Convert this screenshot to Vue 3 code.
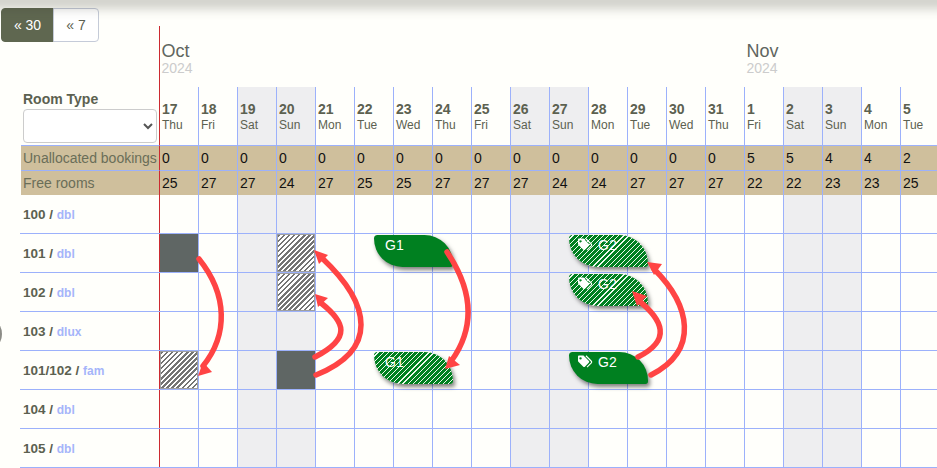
<template>
  <div class="page">
    <div class="top-shadow"></div>
    <div class="side-handle"></div>

    <div class="row months">
      <div class="toolbar">
        <button class="btn active">« 30</button>
        <button class="btn">« 7</button>
      </div>
      <div v-for="(d, i) in days" :key="'m' + i" class="month" :class="{ first: i === 0 }">
        <template v-if="monthAt[i]">
          <div class="month-name">{{ monthAt[i] }}</div>
          <div class="month-year">2024</div>
        </template>
      </div>
    </div>

    <div class="row head">
      <div class="type-filter">
        <label class="type-label">Room Type</label>
        <select class="type-select"><option></option></select>
      </div>
      <div v-for="(d, i) in days" :key="'d' + i" class="day cell" :class="cellClass(i)">
        <div class="day-num">{{ d.n }}</div>
        <div class="day-name">{{ d.w }}</div>
      </div>
    </div>

    <div class="row summary" v-for="s in summary" :key="s.label">
      <div class="summary-label">{{ s.label }}</div>
      <div v-for="(v, i) in s.values" :key="i" class="summary-cell" :class="{ first: i === 0 }">{{ v }}</div>
    </div>

    <div class="row room" v-for="r in rooms" :key="r.name">
      <div class="room-label">{{ r.name }} / <span class="room-type">{{ r.type }}</span></div>
      <div v-for="(d, i) in days" :key="i" class="room-cell cell" :class="cellClass(i)">
        <div v-if="r.blocks[i]" class="block" :class="r.blocks[i]"></div>
        <div v-if="r.bookings[i]" class="booking" :class="{ ghost: r.bookings[i].ghost }">
          <svg v-if="r.bookings[i].tag" class="tag" viewBox="0 0 17 15" width="16" height="14">
            <path fill="#fff" fill-rule="evenodd" d="M1 1.6C1 1 1.4.6 2 .6h4.4c.4 0 .7.1 1 .4l5.3 5.4c.5.5.5 1.2 0 1.7l-4.3 4.4c-.5.5-1.2.5-1.7 0L1.4 7.100c-.3-.3-.4-.6-.4-1zM3.700 2.300a1.300 1.300 0 1 0 0 2.600 1.300 1.300 0 0 0 0-2.600z"/>
            <path fill="none" stroke="#fff" stroke-width="1.200" d="M9.500 .8l5.800 5.900c.5.5.5 1.200 0 1.700l-4.600 4.700"/>
          </svg>
          <span>{{ r.bookings[i].label }}</span>
        </div>
      </div>
    </div>

    <svg class="arrows" width="937" height="468" viewBox="0 0 937 468">
      <g v-for="(a, i) in arrows" :key="i">
        <path :d="a.line" fill="none" stroke="#ff4444" stroke-width="5.5" stroke-linecap="round" />
        <polygon :points="a.head" fill="#ff4444" />
      </g>
    </svg>
  </div>
</template>

<script setup>
const weekNames = ['Thu', 'Fri', 'Sat', 'Sun', 'Mon', 'Tue', 'Wed']
const dayNums = [17, 18, 19, 20, 21, 22, 23, 24, 25, 26, 27, 28, 29, 30, 31, 1, 2, 3, 4, 5]
const days = dayNums.map((n, i) => ({ n, w: weekNames[i % 7] }))
const monthAt = { 0: 'Oct', 15: 'Nov' }

const summary = [
  { label: 'Unallocated bookings', values: [0, 0, 0, 0, 0, 0, 0, 0, 0, 0, 0, 0, 0, 0, 0, 5, 5, 4, 4, 2] },
  { label: 'Free rooms', values: [25, 27, 27, 24, 27, 25, 25, 27, 27, 27, 24, 24, 27, 27, 27, 22, 22, 23, 23, 25] }
]

const rooms = [
  { name: '100', type: 'dbl', blocks: {}, bookings: {} },
  {
    name: '101', type: 'dbl',
    blocks: { 0: 'full', 3: 'hatch' },
    bookings: { 5: { label: 'G1' }, 10: { label: 'G2', tag: true, ghost: true } }
  },
  {
    name: '102', type: 'dbl',
    blocks: { 3: 'hatch' },
    bookings: { 10: { label: 'G2', tag: true, ghost: true } }
  },
  { name: '103', type: 'dlux', blocks: {}, bookings: {} },
  {
    name: '101/102', type: 'fam',
    blocks: { 0: 'hatch', 3: 'full' },
    bookings: { 5: { label: 'G1', ghost: true }, 10: { label: 'G2', tag: true } }
  },
  { name: '104', type: 'dbl', blocks: {}, bookings: {} },
  { name: '105', type: 'dbl', blocks: {}, bookings: {} }
]

const arrows = [
  { line: 'M199 259C228 295 228 335 203 366', head: '198,376 212,372 203,362' },
  { line: 'M315 357C352 338 345 322 321 303', head: '315,294 328,298 318,307' },
  { line: 'M316 375C378 350 372 305 322 258', head: '314,250 328,255 319,264' },
  { line: 'M447 252C476 295 473 330 452 360', head: '445,369 460,365 449,356' },
  { line: 'M638 357C672 340 663 320 638 300', head: '632,291 647,296 637,306' },
  { line: 'M651 375C700 350 690 305 654 269', head: '647,262 662,264 654,275' }
]

const isWeekend = (i) => days[i].w === 'Sat' || days[i].w === 'Sun'
const cellClass = (i) => ({ weekend: isWeekend(i), first: i === 0 })
</script>

<style>
html, body {
  margin: 0;
  overflow: hidden;
  background: #fffffb;
}
</style>

<style scoped>
.page {
  position: relative;
  width: 937px;
  height: 468px;
  overflow: hidden;
  padding-top: 26px;
  box-sizing: border-box;
  background: #fffffb;
  font-family: "Liberation Sans", Arial, sans-serif;
  color: #5c6150;
}

.top-shadow {
  position: absolute;
  top: -6px;
  left: -10px;
  width: 960px;
  height: 6px;
  box-shadow: 0 4px 12px 4px rgba(60, 60, 50, 0.28);
}

.side-handle {
  position: absolute;
  left: -10px;
  top: 323px;
  width: 12px;
  height: 22px;
  border-radius: 50%;
  background: #8c8c86;
  filter: blur(0.6px);
}

.row {
  display: grid;
  grid-template-columns: 139px repeat(20, 39px);
  margin-left: 20px;
  width: 919px;
}

.months { height: 61px; }

.toolbar {
  display: flex;
  margin: -18px 0 0 -19px;
  height: 34px;
}

.btn {
  height: 34px;
  width: 46px;
  padding: 0;
  border: 1px solid #c5cbd8;
  background: #fff;
  color: #5c6150;
  font: 14px "Liberation Sans", Arial, sans-serif;
  border-radius: 0 4px 4px 0;
  margin-left: -1px;
}

.btn.active {
  width: 53px;
  margin-left: 0;
  background: #5f6750;
  border-color: #5f6750;
  color: #fff;
  border-radius: 4px 0 0 4px;
}

.month {
  padding: 15px 0 0 1.5px;
  white-space: nowrap;
  min-width: 0;
  border-left: 1px solid transparent;
}

.month-name {
  font-size: 18px;
  line-height: 20px;
  color: #5f6660;
}

.month-year {
  font-size: 14px;
  line-height: 14px;
  color: #cccccc;
}

.head { height: 58px; }

.type-filter { padding-left: 3px; padding-top: 3px; }

.type-label {
  display: block;
  font-size: 14px;
  font-weight: bold;
  line-height: 19px;
}

.type-select {
  display: block;
  width: 134px;
  height: 34px;
  box-sizing: border-box;
  background: #fff;
  border: 1px solid #ccc;
  border-radius: 4px;
  color: #555;
}

.cell { border-left: 1px solid #9cb1fb; }

.cell.weekend { background: #eeeef0; }

.month.first, .cell.first, .summary-cell.first { border-left-color: #cc2a30; }

.day { padding: 14px 0 0 2px; }

.day-num {
  font-size: 14px;
  font-weight: bold;
  line-height: 16px;
}

.day-name {
  font-size: 12px;
  line-height: 16px;
}

.summary { height: 25px; }

.summary-label, .summary-cell {
  height: 25px;
  box-sizing: border-box;
  background: #cfbf9c;
  border-top: 1px solid #9cb1fb;
  font-size: 14px;
  line-height: 24px;
}

.summary-label {
  margin-left: 1px;
  padding-left: 2px;
  color: #6a6e58;
  white-space: nowrap;
}

.summary-cell {
  border-left: 1px solid #9cb1fb;
  padding-left: 2px;
  color: #111;
}

.room {
  height: 39px;
  box-sizing: border-box;
  border-bottom: 1px solid #9cb1fb;
}

.room-label {
  padding-left: 3px;
  font-size: 13.5px;
  font-weight: bold;
  line-height: 40px;
  white-space: nowrap;
}

.room-type {
  font-size: 12px;
  color: #a5b5fa;
}

.room-cell {
  position: relative;
  height: 38px;
}

.block { height: 100%; }

.block.full { background: #5f6664; }

.block.hatch {
  box-sizing: border-box;
  border: 1px solid #a0a0a0;
  background: repeating-linear-gradient(135deg, #747474 0 1.8px, #fff 1.8px 3.6px);
}

.booking {
  position: absolute;
  z-index: 1;
  top: 1px;
  left: 19px;
  width: 79px;
  height: 32px;
  box-sizing: border-box;
  padding: 2px 0 0 11px;
  display: flex;
  align-items: flex-start;
  gap: 5px;
  overflow: hidden;
  background: #008020;
  color: #fff;
  font-size: 14px;
  line-height: 17px;
  border-radius: 4px 32px 3px 32px;
  box-shadow: 2px 3px 4px rgba(0, 0, 0, 0.5);
}

.booking:has(.tag) { padding-left: 8px; }

.tag { margin-top: 1px; flex: none; }

.booking.ghost {
  background: repeating-linear-gradient(135deg, #008020 0 2.8px, #eefaee 2.8px 3.6px);
}

.arrows {
  position: absolute;
  top: 0;
  left: 0;
  z-index: 2;
  pointer-events: none;
}
</style>
